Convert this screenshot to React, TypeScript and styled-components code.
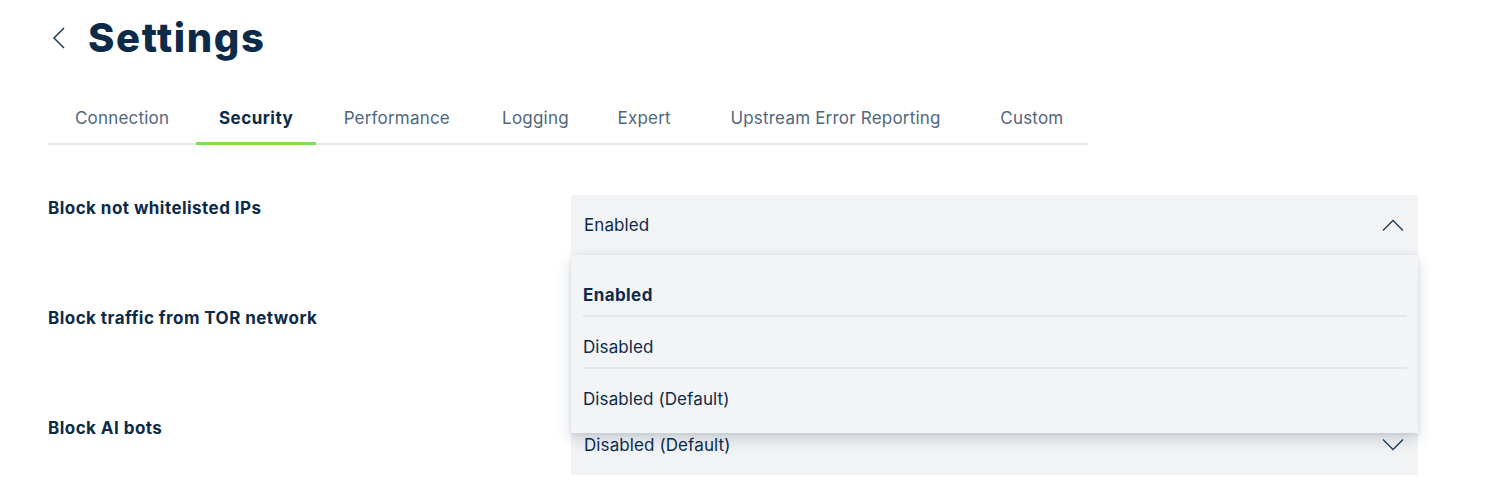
import React, { useState } from 'react';
import styled, { createGlobalStyle } from 'styled-components';

const GlobalStyle = createGlobalStyle`
  body {
    margin: 0;
    background: #ffffff;
    font-family: Inter, "Noto Sans", sans-serif;
    color: #0d2b48;
  }
`;

const Page = styled.div`
  padding: 14px 0 0 48px;
`;

const Header = styled.div`
  display: flex;
  align-items: center;
  gap: 19px;
  height: 48px;
`;

const BackButton = styled.button`
  display: flex;
  align-items: center;
  justify-content: center;
  width: 20px;
  height: 30px;
  margin-left: 1px;
  padding: 0;
  border: none;
  background: none;
  cursor: pointer;
`;

const Title = styled.h1`
  margin: 0;
  font-size: 40px;
  font-weight: 800;
  line-height: 48px;
  letter-spacing: 1.6px;
  color: #0d2b48;
`;

const TabList = styled.div`
  display: inline-flex;
  margin-top: 30px;
  border-bottom: 2px solid #e6e9ec;
`;

type TabProps = { $active?: boolean };

// width follows the bold label so tabs don't shift when selected
const Tab = styled.div<TabProps>`
  display: inline-flex;
  flex-direction: column;
  align-items: center;
  padding: 16px 20px 14px;
  margin-bottom: -2px;
  line-height: 20px;
  font-size: 17px;
  letter-spacing: ${p => (p.$active ? '0.5px' : '0.2px')};
  cursor: pointer;
  color: ${p => (p.$active ? '#0d2b48' : '#51677c')};
  font-weight: ${p => (p.$active ? 700 : 400)};
  border-bottom: 3px solid ${p => (p.$active ? '#7ee24f' : 'transparent')};

  &::after {
    content: attr(data-text);
    font-weight: 700;
    letter-spacing: 1.2px;
    height: 0;
    visibility: hidden;
    overflow: hidden;
  }
`;

const Rows = styled.div`
  display: grid;
  grid-template-columns: 523px 847px;
  row-gap: 50px;
  margin-top: 50px;
`;

const Label = styled.div`
  padding-top: 3px;
  font-size: 17px;
  font-weight: 700;
  letter-spacing: 0.45px;
  line-height: 20px;
  color: #0d2b48;
`;

const SelectWrap = styled.div`
  position: relative;
`;

const SelectBox = styled.div`
  display: flex;
  align-items: center;
  justify-content: space-between;
  height: 60px;
  padding: 0 14px 0 13px;
  background: #f1f3f5;
  font-size: 17px;
  letter-spacing: 0.1px;
  color: #0d2b48;
  cursor: pointer;
`;

const Menu = styled.div`
  position: absolute;
  top: 100%;
  left: 0;
  right: 0;
  z-index: 10;
  padding: 10px 11px 14px 12px;
  background: #f2f4f6;
  box-shadow: 0 6px 14px rgba(20, 45, 75, 0.18), 0 1px 4px rgba(20, 45, 75, 0.08);
`;

type OptionProps = { $selected?: boolean };

const Option = styled.div<OptionProps>`
  padding: 21px 0 11px;
  line-height: 18px;
  font-size: 17px;
  letter-spacing: ${p => (p.$selected ? '0.4px' : '0.1px')};
  font-weight: ${p => (p.$selected ? 700 : 400)};
  color: #0d2b48;
  border-bottom: 2px solid #e4e7ea;
  cursor: pointer;

  &:last-child {
    border-bottom: none;
  }
`;

const Chevron = ({ up }: { up?: boolean }) => (
  <svg width="22" height="12" viewBox="0 0 22 12" fill="none">
    <path
      d={up ? 'M1 11.5 L11 1.5 L21 11.5' : 'M1 0.5 L11 10.5 L21 0.5'}
      stroke="#1d3a57"
      strokeWidth="1.3"
    />
  </svg>
);

const tabs = ['Connection', 'Security', 'Performance', 'Logging', 'Expert', 'Upstream Error Reporting', 'Custom'];
const options = ['Enabled', 'Disabled', 'Disabled (Default)'];

const settings = [
  { label: 'Block not whitelisted IPs', value: 'Enabled' },
  { label: 'Block traffic from TOR network', value: 'Disabled (Default)' },
  { label: 'Block AI bots', value: 'Disabled (Default)' },
];

export default function App() {
  const [activeTab, setActiveTab] = useState(1);
  const [openIndex, setOpenIndex] = useState<number | null>(0);

  return (
    <Page>
      <GlobalStyle />
      <Header>
        <BackButton>
          <svg width="14" height="22" viewBox="0 0 14 22" fill="none">
            <path d="M12 1 L2 11 L12 21" stroke="#1d3a57" strokeWidth="1.5" />
          </svg>
        </BackButton>
        <Title>Settings</Title>
      </Header>

      <TabList>
        {tabs.map((tab, index) => (
          <Tab key={tab} data-text={tab} $active={activeTab === index} onClick={() => setActiveTab(index)}>
            {tab}
          </Tab>
        ))}
      </TabList>

      <Rows>
        {settings.map((setting, index) => (
          <React.Fragment key={setting.label}>
            <Label>{setting.label}</Label>
            <SelectWrap>
              <SelectBox onClick={() => setOpenIndex(openIndex === index ? null : index)}>
                <span>{setting.value}</span>
                <Chevron up={openIndex === index} />
              </SelectBox>
              {openIndex === index && (
                <Menu>
                  {options.map(option => (
                    <Option key={option} $selected={option === setting.value}>
                      {option}
                    </Option>
                  ))}
                </Menu>
              )}
            </SelectWrap>
          </React.Fragment>
        ))}
      </Rows>
    </Page>
  );
}
